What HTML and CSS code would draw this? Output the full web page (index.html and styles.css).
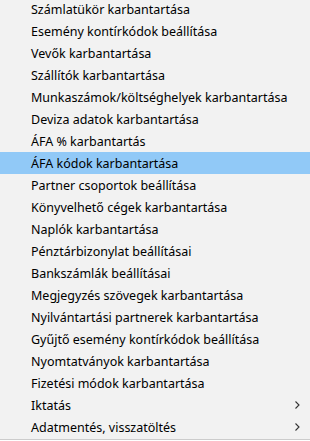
FILE: index.html
```html
<!DOCTYPE html>
<html lang="hu">
<head>
  <meta charset="UTF-8">
  <title>Karbantartás menü</title>
  <link rel="stylesheet" href="styles.css">
</head>
<body>

  <!-- Context menu (Windows style) -->
  <ul class="menu">
    <li class="item">Számlatükör karbantartása</li>
    <li class="item">Esemény kontírkódok beállítása</li>
    <li class="item">Vevők karbantartása</li>
    <li class="item">Szállítók karbantartása</li>
    <li class="item">Munkaszámok/költséghelyek karbantartása</li>
    <li class="item">Deviza adatok karbantartása</li>
    <li class="item">ÁFA % karbantartás</li>
    <li class="item active">ÁFA kódok karbantartása</li>
    <li class="item">Partner csoportok beállítása</li>
    <li class="item">Könyvelhető cégek karbantartása</li>
    <li class="item">Naplók karbantartása</li>
    <li class="item">Pénztárbizonylat beállításai</li>
    <li class="item">Bankszámlák beállításai</li>
    <li class="item">Megjegyzés szövegek karbantartása</li>
    <li class="item">Nyilvántartási partnerek karbantartása</li>
    <li class="item">Gyűjtő esemény kontírkódok beállítása</li>
    <li class="item">Nyomtatványok karbantartása</li>
    <li class="item">Fizetési módok karbantartása</li>
    <li class="item sub">Iktatás
      <svg class="chevron" width="5" height="8" viewBox="0 0 5 8"><path d="M0.5 0.5 L4 4 L0.5 7.5" fill="none" stroke="#333" stroke-width="1.1"/></svg>
    </li>
    <li class="item sub">Adatmentés, visszatöltés
      <svg class="chevron" width="5" height="8" viewBox="0 0 5 8"><path d="M0.5 0.5 L4 4 L0.5 7.5" fill="none" stroke="#333" stroke-width="1.1"/></svg>
    </li>
  </ul>

</body>
</html>
```
FILE: styles.css
```css
/* Page */
html, body {
  margin: 0;
  padding: 0;
  background: #fff;
  overflow: hidden;
}

/* Menu box */
.menu {
  list-style: none;
  margin: -2px 0 0 0;
  padding: 0 0 1px 0;
  width: 310px;
  background: #f2f2f2;
  border-bottom: 1px solid #cccccc;
  font-family: "Noto Sans", "Open Sans", sans-serif;
  font-size: 12.5px;
  color: #000;
}

/* Rows */
.item {
  display: flex;
  align-items: center;
  height: 22px;
  padding-left: 31px;
  padding-right: 10px;
  white-space: nowrap;
}
.item.active {
  background: #91c9f7;
}
.item.sub {
  justify-content: space-between;
}
```
